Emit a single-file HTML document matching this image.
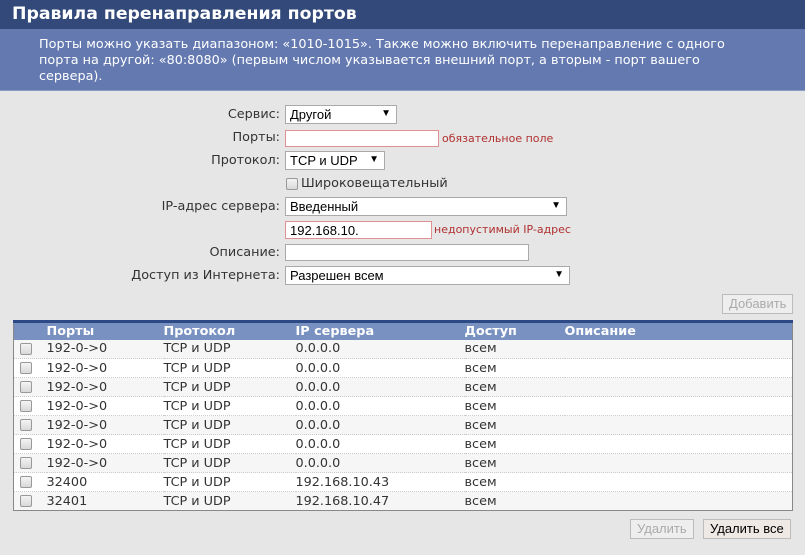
<!DOCTYPE html>
<html><head><meta charset="utf-8"><style>
*{box-sizing:border-box;margin:0;padding:0}
body{width:805px;height:555px;background:#e6e6e6;font-family:"DejaVu Sans","Liberation Sans",sans-serif;font-size:12px;color:#333;position:relative;overflow:hidden}
.title{position:absolute;left:0;top:0;width:805px;height:29px;background:#32497a;color:#fff;font-weight:bold;font-size:17.3px;padding:4px 0 0 12px}
.info{position:absolute;left:0;top:29px;width:805px;height:62px;background:#6379b0;color:#fff;font-size:12.8px;line-height:16px;padding:8px 0 0 39px;border-bottom:1px solid #8a9bc6}
.lbl{position:absolute;right:525px;font-size:12.8px;color:#333;text-align:right;white-space:nowrap}
.ctl{position:absolute;left:285px;height:19px;background:#fff;border:1px solid #aaa;font-family:"Liberation Sans",sans-serif;font-size:13px;padding:1px 4px;color:#000}
.ctl.red{border-color:#e09090}
.arr{position:absolute;right:5px;top:2px;font-size:10px}
.err{position:absolute;color:#b03030;font-size:11px}
.btn{position:absolute;height:20px;border:1px solid #bbb;background:#eee;font-family:"Liberation Sans",sans-serif;font-size:13px;padding:1px 6px;color:#aaa}
table{position:absolute;left:13px;top:320px;width:780px;border-collapse:collapse;border:1px solid #888;border-top:3px solid #2e4a86;background:#fff}
th{background:#7891c0;color:#fff;font-weight:bold;text-align:left;height:18px;font-size:12.8px;padding:0}
td{height:19px;font-size:12.8px;padding:0;border-bottom:1px dotted #ccc}
tr:nth-child(even) td{background:#f6f6f6}
.cb{display:inline-block;width:12px;height:12px;border:1px solid #999;border-radius:2px;background:linear-gradient(#f4f4f4,#d8d8d8);vertical-align:middle;margin-left:6px}
</style></head><body>
<div class="title">Правила перенаправления портов</div>
<div class="info">Порты можно указать диапазоном: «1010-1015». Также можно включить перенаправление с одного<br>порта на другой: «80:8080» (первым числом указывается внешний порт, а вторым - порт вашего<br>сервера).</div>

<div class="lbl" style="top:107px">Сервис:</div>
<div class="ctl" style="top:105px;width:112px">Другой<span class="arr">▼</span></div>
<div class="lbl" style="top:130px">Порты:</div>
<div class="ctl red" style="top:130px;width:154px;height:17px"></div>
<div class="err" style="left:442px;top:132px">обязательное поле</div>
<div class="lbl" style="top:153px">Протокол:</div>
<div class="ctl" style="top:151px;width:100px">TCP и UDP<span class="arr">▼</span></div>
<span class="cb" style="position:absolute;left:280px;top:178px"></span>
<div style="position:absolute;left:301px;top:176px;font-size:12.8px">Широковещательный</div>
<div class="lbl" style="top:199px">IP-адрес сервера:</div>
<div class="ctl" style="top:197px;width:282px">Введенный<span class="arr">▼</span></div>
<div class="ctl red" style="top:221px;width:147px;height:18px">192.168.10.</div>
<div class="err" style="left:434px;top:223px">недопустимый IP-адрес</div>
<div class="lbl" style="top:245px">Описание:</div>
<div class="ctl" style="top:244px;width:244px;height:17px"></div>
<div class="lbl" style="top:268px">Доступ из Интернета:</div>
<div class="ctl" style="top:266px;width:285px">Разрешен всем<span class="arr">▼</span></div>

<div class="btn" style="left:722px;top:294px">Добавить</div>

<table>
<tr><th style="width:33px"></th><th style="width:117px">Порты</th><th style="width:132px">Протокол</th><th style="width:169px">IP сервера</th><th style="width:100px">Доступ</th><th>Описание</th></tr>
<tr><td><span class="cb"></span></td><td>192-0-&gt;0</td><td>TCP и UDP</td><td>0.0.0.0</td><td>всем</td><td></td></tr>
<tr><td><span class="cb"></span></td><td>192-0-&gt;0</td><td>TCP и UDP</td><td>0.0.0.0</td><td>всем</td><td></td></tr>
<tr><td><span class="cb"></span></td><td>192-0-&gt;0</td><td>TCP и UDP</td><td>0.0.0.0</td><td>всем</td><td></td></tr>
<tr><td><span class="cb"></span></td><td>192-0-&gt;0</td><td>TCP и UDP</td><td>0.0.0.0</td><td>всем</td><td></td></tr>
<tr><td><span class="cb"></span></td><td>192-0-&gt;0</td><td>TCP и UDP</td><td>0.0.0.0</td><td>всем</td><td></td></tr>
<tr><td><span class="cb"></span></td><td>192-0-&gt;0</td><td>TCP и UDP</td><td>0.0.0.0</td><td>всем</td><td></td></tr>
<tr><td><span class="cb"></span></td><td>192-0-&gt;0</td><td>TCP и UDP</td><td>0.0.0.0</td><td>всем</td><td></td></tr>
<tr><td><span class="cb"></span></td><td>32400</td><td>TCP и UDP</td><td>192.168.10.43</td><td>всем</td><td></td></tr>
<tr><td><span class="cb"></span></td><td>32401</td><td>TCP и UDP</td><td>192.168.10.47</td><td>всем</td><td></td></tr>
</table>

<div class="btn" style="left:630px;top:519px">Удалить</div>
<div class="btn" style="left:703px;top:519px;color:#000;background:#efe9e6">Удалить все</div>
</body></html>
